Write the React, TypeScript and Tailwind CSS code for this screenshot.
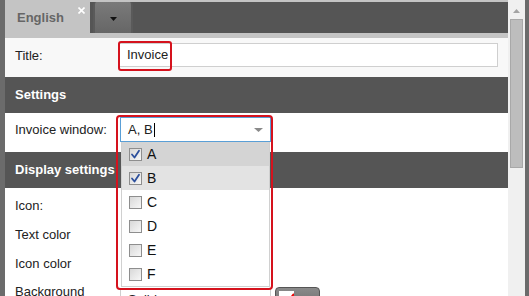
import React from "react";

function Check({ checked }: { checked: boolean }) {
  return (
    <div className="w-[13px] h-[13px] border border-[#8e8e8e] bg-gradient-to-br from-[#d8d8d8] to-[#f7f7f7] flex items-center justify-center shrink-0">
      {checked && (
        <svg width="11" height="11" viewBox="0 0 11 11">
          <path d="M2 5.5 L4.5 8.5 L9 1.8" fill="none" stroke="#2c4f9c" strokeWidth="1.8" strokeLinecap="round" strokeLinejoin="round" />
        </svg>
      )}
    </div>
  );
}

const items = [
  { l: "A", c: true, bg: "bg-[#d4d4d4]" },
  { l: "B", c: true, bg: "bg-[#e3e3e3]" },
  { l: "C", c: false, bg: "bg-white" },
  { l: "D", c: false, bg: "bg-white" },
  { l: "E", c: false, bg: "bg-white" },
  { l: "F", c: false, bg: "bg-white" },
];

export default function App() {
  return (
    <div className="w-[529px] h-[296px] overflow-hidden flex bg-[#c4c4c4] font-['Liberation_Sans',Arial,sans-serif] text-[13px] text-[#222]">
      <div className="w-[5px] h-full bg-[#6b6b6b] shrink-0" />
      <div className="w-[503px] flex flex-col shrink-0">
        {/* tab bar */}
        <div className="h-[33px] flex shrink-0">
          <div className="w-[85px] h-full bg-[#c4c4c4] relative flex items-center pl-[12px] pt-[2px]">
            <span className="font-bold text-[13px] text-[#666]">English</span>
            <svg className="absolute left-[73px] top-[7px]" width="7" height="7" viewBox="0 0 7 7">
              <path d="M0.5 0.5 L6.5 6.5 M6.5 0.5 L0.5 6.5" stroke="#fff" strokeWidth="1.6" />
            </svg>
          </div>
          <div className="flex-1 pt-[2px] bg-[#c4c4c4] flex">
            <div className="flex-1 bg-[#555] pl-[3px] flex">
              <div className="w-[40px] h-full rounded-t-[3px] bg-gradient-to-b from-[#7a7a7a] to-[#666] border-l-[2px] border-r-[2px] border-[#5a5a5a] flex items-center justify-center">
                <svg width="7" height="4" viewBox="0 0 7 4" className="mt-[2px]">
                  <path d="M0 0 L7 0 L3.5 4 Z" fill="#111" />
                </svg>
              </div>
            </div>
          </div>
        </div>
        <div className="h-[5px] bg-[#c4c4c4] shrink-0" />
        {/* title row */}
        <div className="h-[39px] bg-[#f8f8f8] flex items-center shrink-0">
          <div className="w-[113px] pl-[10px] -mt-[4px]">Title:</div>
          <div className="relative w-[380px] h-[24px] border border-[#cfcfcf] bg-white flex items-center pl-[8px] text-[13px] -mt-[5px]">
            <span>Invoice</span>
            <div className="absolute -left-[1px] -top-[3px] w-[54px] h-[30px] border-2 border-[#d5121d] rounded-[3px]" />
          </div>
        </div>
        {/* settings header */}
        <div className="h-[36px] bg-[#555] text-white font-bold flex items-center pl-[10px] shrink-0">Settings</div>
        {/* invoice window row */}
        <div className="h-[39px] bg-white flex items-start pt-[4px] shrink-0 relative z-10">
          <div className="w-[115px] pl-[10px] h-[25px] flex items-center">Invoice window:</div>
          <div className="relative w-[151px] h-[25px] border border-[#5a9fd6] bg-white flex items-center pl-[7px] text-[13px]">
            <span>A, B</span>
            <span className="w-px h-[14px] bg-black ml-px" />
            <svg className="absolute left-[133px] top-[10px]" width="9" height="4" viewBox="0 0 9 4">
              <path d="M0 0 L9 0 L4.5 4 Z" fill="#8a8a8a" />
            </svg>
            <div className="absolute left-0 top-[24px] w-[149px] bg-white border-x border-b border-[#d0d0d0] flex flex-col">
              {items.map((it) => (
                <div key={it.l} className={`h-[24px] flex items-center pl-[7px] gap-[5px] ${it.bg}`}>
                  <Check checked={it.c} />
                  <span className="text-[14px] text-[#111]">{it.l}</span>
                </div>
              ))}
            </div>
            <div className="absolute -left-[5px] -top-[3px] w-[157px] h-[175px] border-2 border-[#d5121d] rounded-[4px]" />
          </div>
        </div>
        {/* display settings header */}
        <div className="h-[36px] bg-[#555] text-white font-bold flex items-center pl-[10px] shrink-0">Display settings</div>
        <div className="flex-1 bg-white pt-[3px] flex flex-col">
          <div className="h-[29px] flex items-center pl-[10px] shrink-0">Icon:</div>
          <div className="h-[29px] flex items-center pl-[10px] shrink-0">Text color</div>
          <div className="h-[29px] flex items-center pl-[10px] shrink-0">Icon color</div>
          <div className="h-[29px] flex items-start shrink-0">
            <div className="w-[115px] pl-[10px] mt-[4px]">Background</div>
            <div className="w-[151px] h-[24px] border border-[#cfcfcf] bg-white mt-[10px] pl-[7px] flex items-center">Solid</div>
            <div className="ml-[4px] mt-[9px] w-[45px] h-[24px] rounded-[4px] border border-[#555] bg-gradient-to-b from-[#8a8a8a] to-[#6a6a6a] pt-[3px] pl-[3px]">
              <svg width="15" height="15" viewBox="0 0 15 15">
                <rect x="0" y="0" width="15" height="15" fill="#fff" />
                <path d="M5 15 L15 3" stroke="#e00" strokeWidth="2" />
              </svg>
            </div>
          </div>
        </div>
      </div>
      {/* scrollbar */}
      <div className="w-[17px] h-full bg-[#f0f0f0] flex flex-col items-center pt-[9px] shrink-0">
        <svg width="7" height="4" viewBox="0 0 7 4">
          <path d="M0 4 L7 4 L3.5 0 Z" fill="#a3a3a3" />
        </svg>
        <div className="mt-[6px] w-[13px] h-[149px] bg-[#bdbdbd] border border-[#a8a8a8]" />
      </div>
      <div className="w-[4px] h-full bg-[#6b6b6b] shrink-0" />
    </div>
  );
}
